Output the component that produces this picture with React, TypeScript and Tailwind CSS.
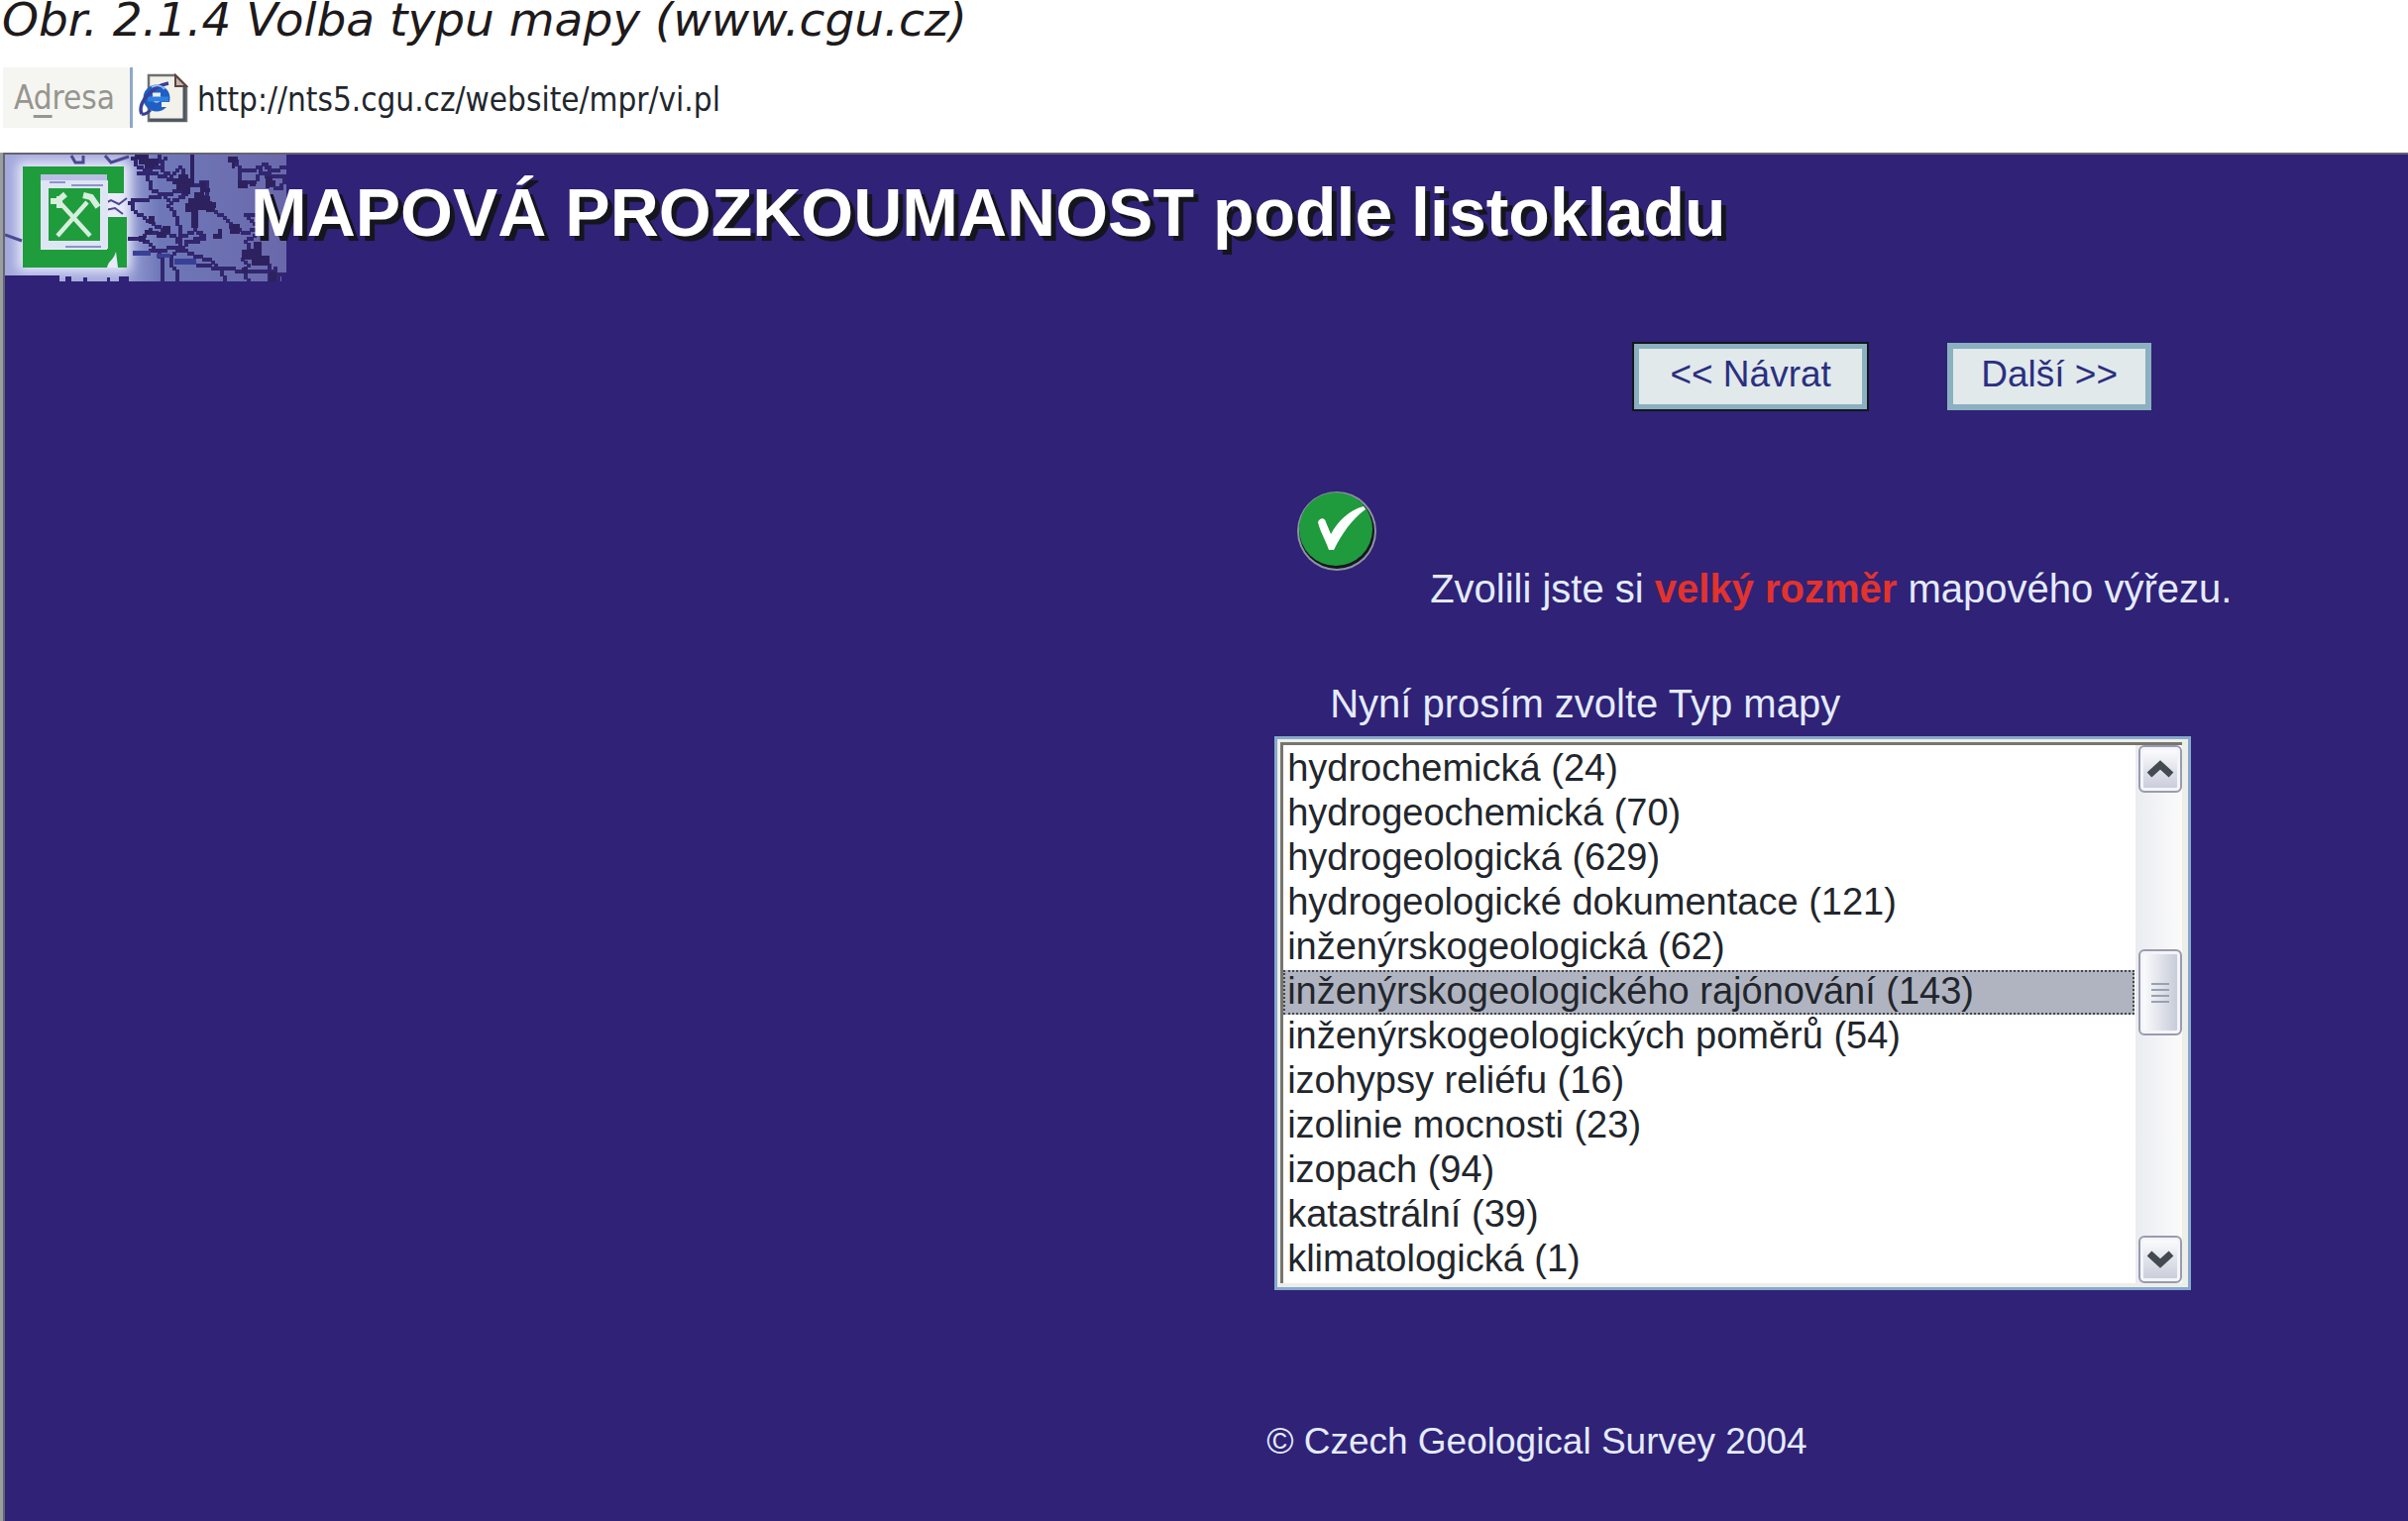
import { useRef } from 'react';

const MAP_TYPES = [
  'hydrochemická (24)',
  'hydrogeochemická (70)',
  'hydrogeologická (629)',
  'hydrogeologické dokumentace (121)',
  'inženýrskogeologická (62)',
  'inženýrskogeologického rajónování (143)',
  'inženýrskogeologických poměrů (54)',
  'izohypsy reliéfu (16)',
  'izolinie mocnosti (23)',
  'izopach (94)',
  'katastrální (39)',
  'klimatologická (1)',
];

// Boundary lines of the map in the logo: flat x, y lists, drawn as square cells.
const BOUNDARIES = [
  [132, 18, 137, 26, 146, 30, 160, 28, 166, 20],
  [140, 17, 146, 23, 156, 23],
  [138, 33, 150, 35, 165, 36, 176, 44],
  [148, 35, 152, 48, 164, 54, 170, 62],
  [130, 65, 140, 60, 157, 57, 178, 51, 188, 54, 174, 60, 168, 66, 174, 72, 180, 90, 182, 108],
  [132, 62, 134, 70, 146, 78, 154, 84, 166, 92, 178, 100, 182, 112],
  [130, 100, 142, 100, 150, 92, 160, 96, 166, 92],
  [142, 100, 150, 106, 156, 112, 162, 124, 163, 142],
  [182, 108, 172, 118, 173, 128, 178, 134, 178, 142],
  [182, 112, 190, 104, 204, 98, 196, 92, 184, 98],
  [186, 102, 196, 104, 204, 100],
  [160, 17, 162, 30, 172, 38, 180, 28, 184, 34, 178, 42],
  [192, 46, 208, 44, 208, 54],
  [196, 90, 197, 64, 204, 58, 214, 70, 226, 78, 234, 92, 250, 94, 258, 88, 246, 76, 256, 76],
  [152, 112, 182, 110, 200, 118, 212, 122, 222, 132, 225, 142],
  [234, 18, 240, 30, 254, 32, 264, 26, 276, 32, 287, 29],
  [240, 34, 242, 44, 256, 42, 262, 32, 268, 34, 272, 46, 284, 50, 286, 38],
  [258, 94, 248, 102, 252, 112, 244, 120, 250, 128, 244, 134, 250, 142],
  [268, 26, 272, 36, 286, 36],
  [258, 118, 270, 128, 272, 142],
  [198, 127, 226, 130, 248, 132, 270, 132, 286, 136],
  [276, 130, 280, 142],
];

const CELL = 3;

function cellPath(points: number[]) {
  const cells = new Set<string>();
  for (let i = 0; i + 3 < points.length; i += 2) {
    const [x0, y0, x1, y1] = points.slice(i, i + 4).map((value) => Math.floor(value / CELL));
    const steps = Math.max(Math.abs(x1 - x0), Math.abs(y1 - y0), 1);
    for (let s = 0; s <= steps; s++) {
      const x = Math.round(x0 + ((x1 - x0) * s) / steps) * CELL;
      const y = Math.round(y0 + ((y1 - y0) * s) / steps) * CELL;
      cells.add(`M${x} ${y}h4v4h-4z`);
    }
  }
  return [...cells].join('');
}

function PageIcon() {
  return (
    <svg viewBox="0 0 50 50" className="h-[50px] w-[50px] shrink-0" aria-hidden="true">
      <path d="M10 2H37L48 13V48H10Z" fill="#f3f2ea" stroke="#6f7072" strokeWidth="2.5" />
      <path d="M46 14V47H11" fill="none" stroke="#4d5560" strokeWidth="3" />
      <path d="M37 2V13H48Z" fill="#c9b3ae" stroke="#5c4440" strokeWidth="2" />
      <circle cx="18" cy="25" r="9" fill="none" stroke="#1f5fc4" strokeWidth="9" />
      <path d="M9 26H30" stroke="#2f7fe0" strokeWidth="5" />
      <path d="M23 29H33V34H23Z" fill="#f3f2ea" />
      <path d="M14 21H22" stroke="#e6eefc" strokeWidth="3" />
      <path d="M3 41C-1 32 10 14 30 10" fill="none" stroke="#3b3f96" strokeWidth="3.5" />
      <path d="M3 41C6 42 9 40 12 37" fill="none" stroke="#3b3f96" strokeWidth="3" />
      <path d="M13 14C17 11 23 12 26 16" fill="none" stroke="#8fc0f5" strokeWidth="2" />
    </svg>
  );
}

function MapLogo() {
  return (
    <svg viewBox="5 16 284 128" className="h-32 w-[284px] shrink-0" role="img" aria-label="Česká geologická služba">
      <defs>
        <linearGradient id="fade" x1="0" x2="1" y1="0" y2="0">
          <stop offset="0" stopColor="#a3a8dc" />
          <stop offset="0.4" stopColor="#a3a9dc" />
          <stop offset="0.55" stopColor="#6e78b8" />
          <stop offset="1" stopColor="#6a68ab" />
        </linearGradient>
        <filter id="glow" x="-30%" y="-30%" width="160%" height="160%">
          <feGaussianBlur stdDeviation="6" />
        </filter>
      </defs>
      <rect x="5" y="16" width="284" height="128" fill="url(#fade)" />
      <rect x="18" y="23" width="114" height="111" fill="#e9ebfb" filter="url(#glow)" />
      <path d="M5 138H60V144H5ZM66 139H72V144H66ZM84 140H88V144H84ZM108 140H111V144H108ZM120 139H130V144H120ZM284 136H289V144H284Z" fill="#2f2277" />
      <g fill="none" stroke="#4d4893" strokeWidth="3">
        <path d="M5 97L22 103M72 17L76 24H84V17M106 17L112 24L130 18M84 18V25" />
        <path d="M104 66L112 62L120 66L128 60M106 72L116 70L124 76" strokeWidth="2" />
      </g>
      <g fill="#31266f" shapeRendering="crispEdges">
        {BOUNDARIES.map((points, index) => (
          <path key={index} d={cellPath(points)} />
        ))}
      </g>
      <g fill="#2d225f" shapeRendering="crispEdges">
        <path d="M136 16H150V20H160V27H156V30H146V26H140V21H136ZM175 40H180V36H190V40H196V48H192V56H184V52H178V46H175ZM190 60H196V54H206V58H212V64H218V70H208V72H200V90H193V74H187V65H190ZM202 44H208V50H212V54H202Z" />
        <path d="M230 18H240V24H237V30H234V24H230ZM240 42H250V50H240ZM252 42H258V48H252ZM268 38H275V42H278V48H272V50H268Z" />
        <path d="M256 104H264V118H272V128H254V112H256ZM220 91H224V101H215V96H220ZM232 86H242V96H232ZM150 78H156V86H150ZM146 92H154V97H146ZM158 94H168V100H158ZM164 88H172V95H164ZM140 98H147V104H140ZM244 112H254V122H244ZM244 130H250V136H244ZM192 16H196V40H192ZM208 68H216V74H208ZM272 134H279V144H272Z" />
      </g>
      <path d="M134 113H152V118H134ZM176 121H198V127H176ZM158 116H172V120H158Z" fill="#3a3f96" />
      <path fillRule="evenodd" d="M23 28H125V55H108V37H41V112H108V79H128V130H23Z" fill="#1f9d3c" />
      <path d="M41 36H108V44H41Z" fill="#b9bfe4" />
      <path d="M108 130C110 122 114 124 117 114L119 130Z" fill="#e9ebfb" />
      <rect x="45" y="46" width="60" height="61" fill="#1f9d3c" stroke="#dfe6f3" strokeWidth="8" />
      <path d="M50 44H66M72 47H104M66 109H102" stroke="#8c92cf" strokeWidth="2" />
      <g fill="none" stroke="#d6eedd" strokeWidth="4.5">
        <path d="M60 64L91 98M88 64L58 98" />
        <path d="M51 63H58L66 56M60 58V70M84 57L92 59L99 69" strokeWidth="6" />
      </g>
    </svg>
  );
}

function CheckIcon() {
  return (
    <svg viewBox="0 0 82 84" className="h-[84px] w-[82px] shrink-0" aria-hidden="true">
      <circle cx="41" cy="42" r="40" fill="#8e93a3" />
      <circle cx="41" cy="42" r="38" fill="#14161f" />
      <circle cx="40" cy="40" r="37" fill="#1f9b3d" />
      <path d="M22 33C24 28 29 28 30 33L35 45C42 32 53 21 68 17L70 20C56 30 46 45 38 61H33C30 52 24 42 22 33Z" fill="#fff" />
    </svg>
  );
}

function Chevron({ up = false }: { up?: boolean }) {
  return (
    <svg viewBox="0 0 28 18" className="h-[18px] w-7" aria-hidden="true">
      <path d={up ? 'M3 15L14 5L25 15' : 'M3 3L14 13L25 3'} fill="none" stroke="#434a52" strokeWidth="7" />
    </svg>
  );
}

const scrollButton =
  'flex h-12 w-11 items-center justify-center rounded-md border-2 border-[#9a9bae] bg-linear-to-b from-white to-[#c6cad8] shadow-[inset_0_0_0_3px_#f4f5fa]';

export default function App() {
  const list = useRef<HTMLSelectElement>(null);
  const scroll = (delta: number) => list.current?.scrollBy({ top: delta });

  return (
    <div className="flex min-h-screen flex-col overflow-x-clip bg-white font-['Liberation_Sans',Arial,sans-serif]">
      <p className="pl-[2px] font-['DejaVu_Sans',Verdana,sans-serif] text-[47px] leading-10 whitespace-nowrap text-[#1e1a1b] italic">
        Obr. 2.1.4 Volba typu mapy (www.cgu.cz)
      </p>

      <div className="mt-7 mb-[25px] flex h-[61px] items-center font-['DejaVu_Sans_Condensed','DejaVu_Sans',Tahoma,sans-serif] text-[33px] leading-[61px]">
        <label htmlFor="address" className="ml-[3px] w-[131px] shrink-0 border-r-3 border-[#8fa9c8] bg-[#f5f5f1] pl-[11px] text-[#96958f]">
          A<span className="underline decoration-3 underline-offset-6">d</span>resa
        </label>
        <div className="ml-1.5 flex grow items-center gap-[9px]">
          <PageIcon />
          <input
            id="address"
            type="text"
            defaultValue="http://nts5.cgu.cz/website/mpr/vi.pl"
            className="min-w-0 grow bg-transparent pt-1 text-[#22262c] outline-none"
          />
        </div>
      </div>

      <div className="flex grow border-l-3 border-[#9b9ea0]">
        <main className="grow border-t-2 border-l-2 border-[#66646e] bg-[#2f2277] text-[40px] leading-11 text-[#e4ebfb]">
          <header className="flex h-32 items-start">
            <MapLogo />
            <h1 className="-ml-9 pt-5 text-[68px] leading-[76px] font-bold whitespace-nowrap text-white [text-shadow:5px_5px_0_#15151d]">
              MAPOVÁ PROZKOUMANOST podle listokladu
            </h1>
          </header>

          <form className="pt-[62px] pl-[52.5%]" onSubmit={(event) => event.preventDefault()}>
            <div className="ml-[370px] flex gap-20 text-[37px] text-[#2b2f80]">
              <button type="button" className="h-[68px] w-[237px] border-6 border-[#8bb0bf] bg-[#e1e9eb] pb-1 outline-2 -outline-offset-1 outline-[#15161d]">
                &lt;&lt; Návrat
              </button>
              <button type="submit" className="h-[68px] w-[206px] border-6 border-[#8bb0bf] bg-[#e1e9eb] pb-1">
                Další &gt;&gt;
              </button>
            </div>

            <div className="mt-20 ml-[30px] flex h-[122px] items-start gap-[53px]">
              <CheckIcon />
              <p className="self-end whitespace-nowrap">
                Zvolili jste si <strong className="text-[#e2332d]">velký rozměr</strong> mapového výřezu.
              </p>
            </div>

            <label htmlFor="map-type" className="mt-[72px] ml-16 block">
              Nyní prosím zvolte Typ mapy
            </label>
            <div className="mt-[11px] ml-2 w-[925px] border-3 border-[#86a9cc] bg-[#eeeee9] p-[3px] pr-1.5 pb-1">
              <div className="flex border-t-3 border-l-3 border-[#77756d] bg-white">
                <select
                  id="map-type"
                  ref={list}
                  size={12}
                  defaultValue={MAP_TYPES[5]}
                  className="h-[543px] min-w-0 grow appearance-none overflow-y-auto bg-white pt-[2px] pr-px text-[38px] leading-[45px] text-[#22262c] outline-none [scrollbar-width:none]"
                >
                  {MAP_TYPES.map((type) => (
                    <option
                      key={type}
                      className="h-[45px] min-h-0 p-0 pl-1 leading-[45px] text-[#22262c] checked:bg-[#b0b4c0] checked:bg-linear-to-r checked:from-[#b0b4c0] checked:to-[#b0b4c0] checked:outline-2 checked:-outline-offset-2 checked:outline-[#44464c] checked:outline-dotted"
                    >
                      {type}
                    </option>
                  ))}
                </select>
                <div className="flex w-[47px] shrink-0 flex-col items-end bg-linear-to-r from-[#ebecf1] to-[#fbfbfb]">
                  <button type="button" aria-label="Nahoru" onClick={() => scroll(-45)} className={scrollButton}>
                    <Chevron up />
                  </button>
                  <div className="mt-[158px] flex h-[87px] w-11 flex-col items-center justify-center gap-1 rounded-md border-2 border-[#9a9bae] bg-linear-to-r from-white to-[#c3c8d6] shadow-[inset_0_0_0_3px_#f4f5fa]">
                    <span className="h-[2px] w-[18px] bg-[#98a0b3]" />
                    <span className="h-[2px] w-[18px] bg-[#98a0b3]" />
                    <span className="h-[2px] w-[18px] bg-[#98a0b3]" />
                    <span className="h-[2px] w-[18px] bg-[#98a0b3]" />
                  </div>
                  <button type="button" aria-label="Dolů" onClick={() => scroll(45)} className={`${scrollButton} mt-auto`}>
                    <Chevron />
                  </button>
                </div>
              </div>
            </div>
          </form>

          <footer className="mt-[131px] pl-[52.5%] text-[37px] whitespace-nowrap">© Czech Geological Survey 2004</footer>
        </main>
      </div>
    </div>
  );
}
